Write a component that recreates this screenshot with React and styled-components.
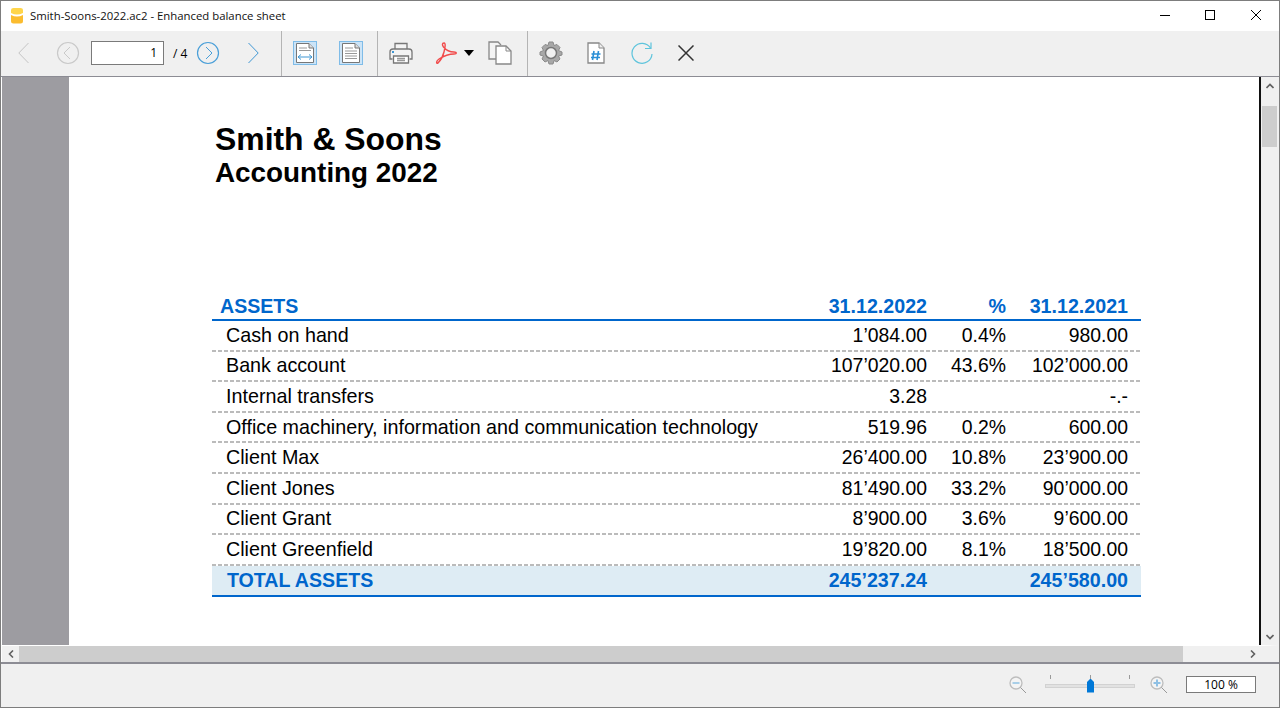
import React from 'react';
import styled, { createGlobalStyle } from 'styled-components';

const Global = createGlobalStyle`
	html, body { margin: 0; padding: 0; background: #fff; }
	* { box-sizing: border-box; }
`;

const rows = [
	['Cash on hand', '1’084.00', '0.4%', '980.00'],
	['Bank account', '107’020.00', '43.6%', '102’000.00'],
	['Internal transfers', '3.28', '', '-.-'],
	['Office machinery, information and communication technology', '519.96', '0.2%', '600.00'],
	['Client Max', '26’400.00', '10.8%', '23’900.00'],
	['Client Jones', '81’490.00', '33.2%', '90’000.00'],
	['Client Grant', '8’900.00', '3.6%', '9’600.00'],
	['Client Greenfield', '19’820.00', '8.1%', '18’500.00'],
];

const App = () => (
	<Ventana>
		<Global />
		<BarraTitulo>
			<Logo width="16" height="17" viewBox="0 0 16 17">
				<path d="M2 3 Q2 1 4.5 1 H11.5 Q14 1 14 3 V6 Q8 9 2 6Z" fill="#ffd54a" />
				<path d="M2 8 Q8 11 14 8 V14 Q14 16.5 11.5 16.5 H4.5 Q2 16.5 2 14Z" fill="#fbbc2f" />
			</Logo>
			<TextoTitulo>Smith-Soons-2022.ac2 - Enhanced balance sheet</TextoTitulo>
			<BotonesVentana>
				<svg width="12" height="12" viewBox="0 0 12 12"><path d="M2 6.5H12" stroke="#000" /></svg>
				<svg width="12" height="12" viewBox="0 0 12 12"><rect x="1.5" y="1.5" width="9" height="9" fill="none" stroke="#000" /></svg>
				<svg width="12" height="12" viewBox="0 0 12 12"><path d="M1 1L11 11M11 1L1 11" stroke="#000" /></svg>
			</BotonesVentana>
		</BarraTitulo>

		<Herramientas>
			<Grupo $ancho={281} $pad={17}>
				<Icono $ancho={11} $izq={0}>
					<svg width="11" height="22" viewBox="0 0 11 22"><path d="M10.5 1L0.8 11L10.5 21" fill="none" stroke="#c4c4c4" /></svg>
				</Icono>
				<Icono $ancho={24} $izq={27}>
					<svg width="24" height="24" viewBox="0 0 24 24">
						<circle cx="12" cy="12" r="10.5" fill="none" stroke="#c9c9c9" strokeWidth="1.2" />
						<path d="M14 6L8 12L14 18" fill="none" stroke="#c9c9c9" />
					</svg>
				</Icono>
				<CampoPagina>1</CampoPagina>
				<TotalPaginas>/ 4</TotalPaginas>
				<Icono $ancho={24} $izq={0}>
					<svg width="24" height="24" viewBox="0 0 24 24">
						<circle cx="12" cy="12" r="10.5" fill="none" stroke="#4a9fd8" strokeWidth="1.2" />
						<path d="M10 6L16 12L10 18" fill="none" stroke="#4a9fd8" />
					</svg>
				</Icono>
				<Icono $ancho={11} $izq={28}>
					<svg width="11" height="22" viewBox="0 0 11 22"><path d="M0.5 1L10.2 11L0.5 21" fill="none" stroke="#3f97d4" /></svg>
				</Icono>
			</Grupo>
			<Grupo $ancho={96}>
				<IconoActivo $izq={11}>
					<svg width="18" height="20" viewBox="0 0 18 20">
						<path d="M0.5 0.5H13L17.5 5V19.5H0.5Z" fill="#fff" stroke="#777" />
						<path d="M13 0.5V5H17.5" fill="#ddd" stroke="#777" />
						<path d="M3 5H11M3 7.5H15" stroke="#999" />
						<path d="M2 14H16M2 14L5 11.5M2 14L5 16.5M16 14L13 11.5M16 14L13 16.5" fill="none" stroke="#3f97d4" />
					</svg>
				</IconoActivo>
				<IconoActivo $izq={22}>
					<svg width="18" height="20" viewBox="0 0 18 20">
						<path d="M0.5 0.5H13L17.5 5V19.5H0.5Z" fill="#fff" stroke="#777" />
						<path d="M13 0.5V5H17.5" fill="#ddd" stroke="#777" />
						<path d="M3 5H11M3 8H15M3 10.5H15M3 13H15M3 15.5H15" stroke="#999" />
					</svg>
				</IconoActivo>
			</Grupo>
			<Grupo $ancho={150}>
				<Icono $ancho={24} $izq={11}>
					<svg width="24" height="24" viewBox="0 0 24 24">
						<path d="M6 8V2.5H18V8" fill="#f4f4f4" stroke="#777" strokeWidth="1.3" />
						<path d="M3.5 18H1V11Q1 8 4 8H20Q23 8 23 11V18H20.5" fill="#f4f4f4" stroke="#777" strokeWidth="1.3" />
						<rect x="3" y="10" width="2" height="2" fill="#3f97d4" />
						<path d="M4.5 15H19.5V22H4.5Z" fill="#fff" stroke="#777" strokeWidth="1.3" />
						<path d="M8 17.5H16M8 19.5H16" stroke="#999" strokeWidth="1.3" />
					</svg>
				</Icono>
				<Icono $ancho={22} $izq={22}>
					<svg width="22" height="24" viewBox="0 0 22 24">
						<path d="M9 2C11 2 10 7 9 11C8 15 5 20 3 22C1 23 1 20 4 18C8 15.5 14 13 19 13C22 13 22 11 19 11C15 11 11 9 8.5 6C7 4 7 2 9 2Z" fill="none" stroke="#f14b4b" strokeWidth="1.4" />
					</svg>
				</Icono>
				<Icono $ancho={10} $izq={7}>
					<svg width="10" height="6" viewBox="0 0 10 6"><path d="M0 0H10L5 6Z" fill="#000" /></svg>
				</Icono>
				<Icono $ancho={24} $izq={14}>
					<svg width="24" height="24" viewBox="0 0 24 24">
						<path d="M9 18H1V1H10L13 4" fill="#f4f4f4" stroke="#888" strokeWidth="1.3" />
						<path d="M8 5H18L23 10V23H8Z" fill="#fff" stroke="#888" strokeWidth="1.3" />
						<path d="M18 5V10H23" fill="none" stroke="#888" />
					</svg>
				</Icono>
			</Grupo>
			<Grupo $ancho={170} $ultimo>
				<Icono $ancho={24} $izq={11}>
					<svg width="24" height="24" viewBox="0 0 24 24">
						<path d="M10 1H14L15 4.5L18 3.5L21 6.5L19.5 9.5L23 11V14L19.5 15L21 18L18 21L15 19.5L14 23H10L9 19.5L6 21L3 18L4.5 15L1 14V11L4.5 9.5L3 6.5L6 3.5L9 4.5Z" fill="#a8a8a8" stroke="#8a8a8a" />
						<circle cx="12" cy="12" r="5.5" fill="#f0f0f0" stroke="#777" strokeWidth="1.5" />
					</svg>
				</Icono>
				<Icono $ancho={18} $izq={24}>
					<svg width="18" height="22" viewBox="0 0 18 22">
						<path d="M1 1H12L17 6V21H1Z" fill="#fff" stroke="#888" strokeWidth="1.3" />
						<path d="M12 1V6H17" fill="#eee" stroke="#888" />
						<path d="M7 9L5.5 18M11.5 9L10 18M4.5 12H13.5M4 15.5H13" fill="none" stroke="#2a8fd6" strokeWidth="1.6" />
					</svg>
				</Icono>
				<Icono $ancho={24} $izq={25}>
					<svg width="24" height="24" viewBox="0 0 24 24">
						<path d="M20.5 7A10 10 0 1 0 22 13" fill="none" stroke="#5ec4dc" strokeWidth="1.2" />
						<path d="M21 1.5V7.5H15" fill="none" stroke="#5ec4dc" strokeWidth="1.2" />
					</svg>
				</Icono>
				<Icono $ancho={16} $izq={24}>
					<svg width="16" height="16" viewBox="0 0 16 16"><path d="M0.5 0.5L15.5 15.5M15.5 0.5L0.5 15.5" stroke="#333" strokeWidth="1.5" /></svg>
				</Icono>
			</Grupo>
		</Herramientas>

		<Visor>
			<Margen />
			<Documento>
				<Hoja>
					<Empresa>Smith &amp; Soons</Empresa>
					<Ejercicio>Accounting 2022</Ejercicio>
					<Tabla>
						<FilaCabecera>
							<span>ASSETS</span>
							<Cifra>31.12.2022</Cifra>
							<Cifra>%</Cifra>
							<Cifra>31.12.2021</Cifra>
						</FilaCabecera>
						{rows.map(r => (
							<Fila key={r[0]}>
								<Etiqueta>{r[0]}</Etiqueta>
								<Cifra>{r[1]}</Cifra>
								<Cifra>{r[2]}</Cifra>
								<Cifra>{r[3]}</Cifra>
							</Fila>
						))}
						<FilaTotal>
							<Etiqueta>TOTAL ASSETS</Etiqueta>
							<Cifra>245’237.24</Cifra>
							<Cifra></Cifra>
							<Cifra>245’580.00</Cifra>
						</FilaTotal>
					</Tabla>
				</Hoja>
			</Documento>
			<BarraVertical>
				<Flecha>
					<svg width="8" height="6" viewBox="0 0 8 6"><path d="M0.5 5L4 1.5L7.5 5" fill="none" stroke="#606060" strokeWidth="1.6" /></svg>
				</Flecha>
				<PulgarVertical />
				<Hueco />
				<Flecha>
					<svg width="8" height="6" viewBox="0 0 8 6"><path d="M0.5 1L4 4.5L7.5 1" fill="none" stroke="#606060" strokeWidth="1.6" /></svg>
				</Flecha>
			</BarraVertical>
		</Visor>

		<BarraHorizontal>
			<FlechaHorizontal>
				<svg width="6" height="8" viewBox="0 0 6 8"><path d="M5 0.5L1.5 4L5 7.5" fill="none" stroke="#606060" strokeWidth="1.6" /></svg>
			</FlechaHorizontal>
			<PulgarHorizontal />
			<Hueco />
			<FlechaHorizontal>
				<svg width="6" height="8" viewBox="0 0 6 8"><path d="M1 0.5L4.5 4L1 7.5" fill="none" stroke="#606060" strokeWidth="1.6" /></svg>
			</FlechaHorizontal>
		</BarraHorizontal>

		<Pie>
			<svg width="18" height="18" viewBox="0 0 18 18">
				<circle cx="7" cy="7" r="6" fill="#f4f4f4" stroke="#bdbdbd" strokeWidth="1.3" />
				<path d="M3.5 7H10.5" stroke="#a9cfe8" strokeWidth="2" />
				<path d="M11.5 11.5L17 17" stroke="#999" />
			</svg>
			<Deslizador>
				<Marcas><i /><i /><i /></Marcas>
				<Riel />
				<Cursor />
			</Deslizador>
			<svg width="18" height="18" viewBox="0 0 18 18">
				<circle cx="7" cy="7" r="6" fill="#f4f4f4" stroke="#bdbdbd" strokeWidth="1.3" />
				<path d="M3.5 7H10.5M7 3.5V10.5" stroke="#8fc0e4" strokeWidth="2" />
				<path d="M11.5 11.5L17 17" stroke="#999" />
			</svg>
			<CampoZoom>100 %</CampoZoom>
		</Pie>
	</Ventana>
);

export default App;

const Ventana = styled.div`
	width: 1280px;
	height: 708px;
	display: flex;
	flex-direction: column;
	border: 1px solid #7d7d7d;
	overflow: hidden;
	font-family: "Liberation Sans", Arial, sans-serif;
	color: #000;
	background: #fff;
`;

const BarraTitulo = styled.div`
	height: 30px;
	flex: none;
	display: flex;
	align-items: center;
	padding-left: 8px;
	background: #fff;
`;

const Logo = styled.svg`
	flex: none;
	margin-bottom: 2px;
`;

const TextoTitulo = styled.span`
	margin-left: 5px;
	margin-bottom: 2px;
	font-family: "Open Sans", sans-serif;
	font-size: 11.36px;
	color: #111;
`;

const BotonesVentana = styled.div`
	margin-left: auto;
	margin-bottom: 2px;
	display: flex;
	gap: 34px;
	padding-right: 17px;
`;

const Herramientas = styled.div`
	height: 46px;
	flex: none;
	display: flex;
	background: #f0f0f0;
	border-bottom: 1px solid #8c8c94;
`;

const Grupo = styled.div`
	width: ${p => p.$ancho}px;
	display: flex;
	align-items: center;
	padding-left: ${p => p.$pad || 0}px;
	padding-bottom: 1px;
	border-right: ${p => (p.$ultimo ? 'none' : '1px solid #b4b4b4')};
`;

const Icono = styled.span`
	width: ${p => p.$ancho}px;
	margin-left: ${p => p.$izq}px;
	flex: none;
	display: flex;
	align-items: center;
	justify-content: flex-start;
`;

const IconoActivo = styled.span`
	width: 24px;
	height: 24px;
	margin-left: ${p => p.$izq}px;
	flex: none;
	display: flex;
	align-items: center;
	justify-content: center;
	background: #cce4f7;
	border: 1px solid #7fbce8;
`;

const CampoPagina = styled.div`
	width: 73px;
	height: 24px;
	margin-left: 11px;
	padding-right: 6px;
	flex: none;
	border: 1px solid #7a7a7a;
	background: #fff;
	font-family: "Open Sans", sans-serif;
	font-size: 12px;
	line-height: 22px;
	text-align: right;
`;

const TotalPaginas = styled.span`
	width: 32px;
	padding-left: 9px;
	flex: none;
	font-family: "Open Sans", sans-serif;
	font-size: 12px;
`;

const Visor = styled.div`
	height: 568px;
	flex: none;
	display: flex;
`;

const Margen = styled.div`
	width: 67px;
	flex: none;
	margin-left: 1px;
	background: #9d9ca1;
`;

const Documento = styled.div`
	width: 1192px;
	flex: none;
	background: #fff;
	border-right: 2px solid #111;
	overflow: hidden;
`;

const Hoja = styled.div`
	padding: 45px 0 0 143px;
`;

const Empresa = styled.div`
	padding-left: 3px;
	font-size: 31.9px;
	font-weight: 700;
	line-height: 34px;
`;

const Ejercicio = styled.div`
	padding-left: 3px;
	font-size: 27.85px;
	font-weight: 700;
	line-height: 32px;
	margin-top: 1px;
`;

const Tabla = styled.div`
	width: 929px;
	margin-top: 102px;
`;

const Fila = styled.div`
	display: grid;
	grid-template-columns: 1fr 120px 79px 122px;
	align-items: center;
	height: 30.62px;
	padding: 0 13px 2px 14px;
	font-size: 19.73px;
	background: repeating-linear-gradient(90deg, #bbbbbb 0 4px, transparent 4px 6px) left bottom / 100% 2px no-repeat;
`;

const Etiqueta = styled.span`
	white-space: nowrap;
`;

const Cifra = styled.span`
	font-size: 19.4px;
	text-align: right;
	white-space: nowrap;
`;

const FilaCabecera = styled(Fila)`
	height: 30px;
	padding: 4px 13px 2px 8px;
	font-size: 19.6px;
	font-weight: 700;
	color: #0066cc;
	background: none;
	border-bottom: 2px solid #0066cc;

	${Cifra} { font-size: 19.65px; }
`;

const FilaTotal = styled(Fila)`
	height: 31px;
	font-size: 19.6px;
	font-weight: 700;
	color: #0066cc;
	background: #deecf4;
	border-bottom: 2px solid #0066cc;
	padding: 0 13px 0 15px;

	${Cifra} { font-size: 19.65px; }
`;

const BarraVertical = styled.div`
	width: 18px;
	flex: none;
	display: flex;
	flex-direction: column;
	background: #f0f0f0;
`;

const Flecha = styled.div`
	height: 17px;
	flex: none;
	display: flex;
	align-items: center;
	justify-content: center;
`;

const PulgarVertical = styled.div`
	height: 41px;
	margin: 12px 2px 0 1px;
	flex: none;
	background: #cdcdcd;
`;

const Hueco = styled.div`
	flex: 1;
`;

const BarraHorizontal = styled.div`
	height: 17px;
	flex: none;
	display: flex;
	margin-left: 1px;
	background: #f0f0f0;
	border-top: 1px solid #fff;
	border-right: 18px solid #f0f0f0;
`;

const FlechaHorizontal = styled.div`
	width: 17px;
	flex: none;
	display: flex;
	align-items: center;
	justify-content: center;
`;

const PulgarHorizontal = styled.div`
	width: 1164px;
	flex: none;
	background: #cdcdcd;
`;

const Pie = styled.div`
	flex: 1;
	display: flex;
	align-items: center;
	justify-content: flex-end;
	padding: 0 23px 2px 0;
	background: #f0f0f0;
	border-top: 2px solid #8c8c94;
`;

const Deslizador = styled.div`
	position: relative;
	width: 90px;
	height: 20px;
	margin: 0 15px 0 18px;
`;

const Marcas = styled.div`
	display: flex;
	justify-content: space-between;
	padding: 0 5px;

	i { width: 1px; height: 4px; background: #9a9a9a; }
`;

const Riel = styled.div`
	height: 4px;
	margin-top: 5px;
	background: #e2e2e2;
	border: 1px solid #d2d2d2;
`;

const Cursor = styled.div`
	position: absolute;
	left: 42px;
	top: 4px;
	width: 7px;
	height: 14px;
	background: #0078d7;
	clip-path: polygon(50% 0, 100% 25%, 100% 100%, 0 100%, 0 25%);
`;

const CampoZoom = styled.div`
	width: 70px;
	height: 17px;
	margin-left: 18px;
	border: 1px solid #7a7a7a;
	background: #fff;
	font-family: "Open Sans", sans-serif;
	font-size: 12px;
	line-height: 15px;
	text-align: center;
`;
